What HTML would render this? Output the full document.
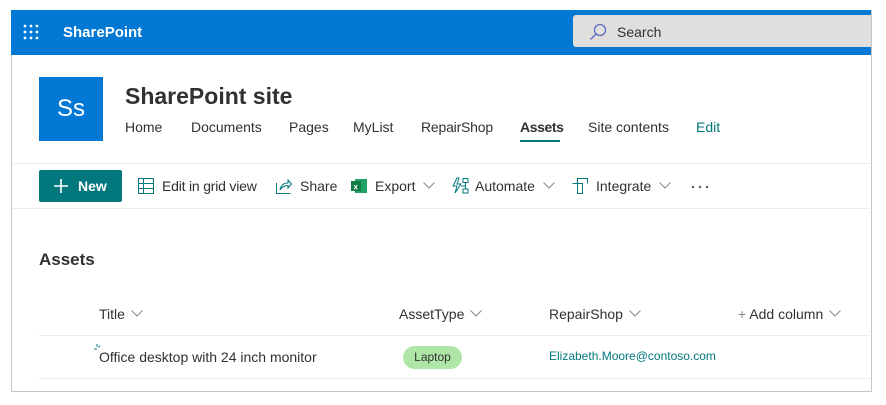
<!DOCTYPE html>
<html><head><meta charset="utf-8"><style>
body{margin:0;width:886px;height:405px;background:#fff;font-family:"Liberation Sans",sans-serif;position:relative;overflow:hidden;color:#323130}
.a{position:absolute;white-space:nowrap}
#frame{position:absolute;left:11px;top:10px;width:859px;height:381px;border:1px solid #c8c6c4;border-top:none}
.nav{font-size:14px;top:119px;color:#323130}
.cmd{font-size:14px;top:178px;color:#323130}
.hd{font-size:14px;top:306px;color:#323130}
.cv{display:inline-block;vertical-align:middle;margin-left:4px;margin-top:-3px}
</style></head><body>
<div id="frame"></div>
<div class="a" style="left:11px;top:10px;width:860px;height:45px;background:#0078d4"></div>
<svg class="a" style="left:23px;top:24px" width="16" height="16"><g fill="#fff"><circle cx="2" cy="2" r="1.4"/><circle cx="8" cy="2" r="1.4"/><circle cx="14" cy="2" r="1.4"/><circle cx="2" cy="8" r="1.4"/><circle cx="8" cy="8" r="1.4"/><circle cx="14" cy="8" r="1.4"/><circle cx="2" cy="14" r="1.4"/><circle cx="8" cy="14" r="1.4"/><circle cx="14" cy="14" r="1.4"/></g></svg>
<div class="a" style="left:63px;top:24px;color:#fff;font-weight:bold;font-size:15px">SharePoint</div>
<div class="a" style="left:573px;top:15px;width:298px;height:32px;background:#e1dfdd;border-radius:3px 0 0 3px"></div>
<svg class="a" style="left:589px;top:23px" width="18" height="18"><circle cx="11" cy="7" r="5.5" fill="none" stroke="#5c6ac4" stroke-width="1.3"/><path d="M7 11L1.5 16.5" stroke="#5c6ac4" stroke-width="1.3"/></svg>
<div class="a" style="left:617px;top:24px;font-size:14px;color:#323130">Search</div>
<div class="a" style="left:39px;top:77px;width:64px;height:64px;background:#0078d4;color:#fff;font-size:24px;line-height:64px;text-align:center">Ss</div>
<div class="a" style="left:125px;top:83px;font-size:23px;font-weight:bold;color:#323130">SharePoint site</div>
<div class="a nav" style="left:125px">Home</div>
<div class="a nav" style="left:191px">Documents</div>
<div class="a nav" style="left:289px">Pages</div>
<div class="a nav" style="left:353px">MyList</div>
<div class="a nav" style="left:421px;letter-spacing:-0.2px">RepairShop</div>
<div class="a nav" style="left:520px;font-weight:bold;letter-spacing:-0.4px">Assets</div>
<div class="a" style="left:520px;top:140px;width:40px;height:2px;background:#03787c"></div>
<div class="a nav" style="left:588px">Site contents</div>
<div class="a nav" style="left:696px;color:#03787c">Edit</div>
<div class="a" style="left:12px;top:163px;width:858px;height:1px;background:#edebe9"></div>
<div class="a" style="left:12px;top:208px;width:858px;height:1px;background:#edebe9"></div>
<div class="a" style="left:39px;top:170px;width:83px;height:32px;background:#03787c;border-radius:2px"></div>
<svg class="a" style="left:54px;top:179px" width="14" height="14"><path d="M7 0v14M0 7h14" stroke="#fff" stroke-width="1.6"/></svg>
<div class="a" style="left:78px;top:178px;color:#fff;font-size:14px;font-weight:bold">New</div>
<svg class="a" style="left:138px;top:178px" width="16" height="16"><g fill="none" stroke="#03787c" stroke-width="1"><rect x=".5" y=".5" width="15" height="15"/><path d="M.5 5.5h15M.5 10.5h15M5.5.5v15"/></g></svg>
<div class="a cmd" style="left:162px;letter-spacing:-0.2px">Edit in grid view</div>
<svg class="a" style="left:276px;top:178px" width="16" height="16"><g fill="none" stroke="#03787c" stroke-width="1"><path d="M.5 5v10.5h14"/><path d="M4 12c1-5 4-7 8-7V2l3.5 4-3.5 4V7.5c-3 0-6 1.5-8 4.5z"/></g></svg>
<div class="a cmd" style="left:300px">Share</div>
<svg class="a" style="left:351px;top:178px" width="16" height="16"><rect x="4" y="1" width="12" height="14" fill="#21a366"/><rect x="0" y="3" width="10" height="10" fill="#107c41"/><text x="2.5" y="11.5" font-size="8" fill="#fff" font-family="Liberation Sans" font-weight="bold">x</text></svg>
<div class="a cmd" style="left:375px">Export<svg class="cv" width="12" height="7" style="margin-left:8px"><path d="M.5.5l5.5 5.5 5.5-5.5" fill="none" stroke="#8a8886"/></svg></div>
<svg class="a" style="left:451px;top:177px" width="18" height="18"><g fill="none" stroke="#03787c" stroke-width="1"><path d="M6 1L2 9h4l-2 7 6-9H6l2-6z"/><rect x="12" y="1.5" width="5" height="4"/><rect x="12" y="12" width="5" height="4"/><path d="M14.5 5.5v6.5M10 9h4.5"/></g></svg>
<div class="a cmd" style="left:475px">Automate<svg class="cv" width="12" height="7" style="margin-left:8px"><path d="M.5.5l5.5 5.5 5.5-5.5" fill="none" stroke="#8a8886"/></svg></div>
<svg class="a" style="left:572px;top:178px" width="16" height="16"><g fill="none" stroke="#03787c" stroke-width="1"><path d="M.5 5.5h10v10h-5v-15h10v5"/></g></svg>
<div class="a cmd" style="left:596px">Integrate<svg class="cv" width="12" height="7" style="margin-left:8px"><path d="M.5.5l5.5 5.5 5.5-5.5" fill="none" stroke="#8a8886"/></svg></div>
<svg class="a" style="left:691px;top:185px" width="18" height="4"><g fill="#605e5c"><circle cx="2" cy="2" r="1.2"/><circle cx="9" cy="2" r="1.2"/><circle cx="16" cy="2" r="1.2"/></g></svg>
<div class="a" style="left:39px;top:250px;font-size:17px;font-weight:bold;color:#323130">Assets</div>
<div class="a hd" style="left:99px">Title<svg class="cv" width="12" height="7" style="margin-left:6px"><path d="M.5.5l5.5 5.5 5.5-5.5" fill="none" stroke="#8a8886"/></svg></div>
<div class="a hd" style="left:399px">AssetType<svg class="cv" width="12" height="7" style="margin-left:6px"><path d="M.5.5l5.5 5.5 5.5-5.5" fill="none" stroke="#8a8886"/></svg></div>
<div class="a hd" style="left:549px">RepairShop<svg class="cv" width="12" height="7" style="margin-left:6px"><path d="M.5.5l5.5 5.5 5.5-5.5" fill="none" stroke="#8a8886"/></svg></div>
<div class="a hd" style="left:738px"><span style="color:#8a8886">+</span> Add column<svg class="cv" width="12" height="7" style="margin-left:6px"><path d="M.5.5l5.5 5.5 5.5-5.5" fill="none" stroke="#8a8886"/></svg></div>
<div class="a" style="left:39px;top:335px;width:831px;height:1px;background:#edebe9"></div>
<div class="a" style="left:39px;top:378px;width:831px;height:1px;background:#edebe9"></div>
<svg class="a" style="left:93px;top:344px" width="8" height="8"><path d="M4 0v3M1 5h3M5.5 3.5L7 1.5" stroke="#03787c" stroke-width="1"/></svg>
<div class="a" style="left:99px;top:349px;font-size:14px">Office desktop with 24 inch monitor</div>
<div class="a" style="left:403px;top:346px;width:59px;height:23px;background:#aee6a7;border-radius:12px;font-size:12px;line-height:23px;text-align:center;color:#323130">Laptop</div>
<div class="a" style="left:549px;top:349px;font-size:12px;color:#03787c">Elizabeth.Moore@contoso.com</div>
</body></html>
